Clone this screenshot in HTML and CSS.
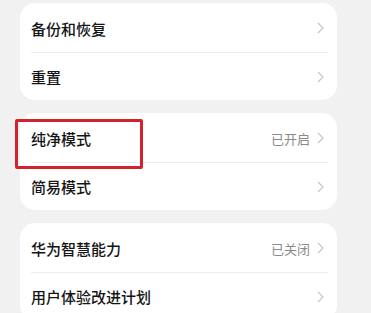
FILE: index.html
```html
<!DOCTYPE html>
<html lang="zh-CN">
<head>
    <meta charset="UTF-8">
    <meta name="viewport" content="width=device-width, initial-scale=1.0">
    <title>设置</title>
    <link rel="stylesheet" href="styles.css">
</head>
<body>
    <div class="page">
        <div class="card">
            <div class="row">
                <span class="label">备份和恢复</span>
                <span class="arrow"><svg width="7" height="12" viewBox="0 0 7 12"><path d="M1 1 L6 6 L1 11" fill="none" stroke="#c6c6c6" stroke-width="1.2"/></svg></span>
            </div>
            <div class="row">
                <span class="label">重置</span>
                <span class="arrow"><svg width="7" height="12" viewBox="0 0 7 12"><path d="M1 1 L6 6 L1 11" fill="none" stroke="#c6c6c6" stroke-width="1.2"/></svg></span>
            </div>
        </div>

        <div class="card">
            <!-- highlight box around the first row -->
            <div class="mark"></div>
            <div class="row">
                <span class="label">纯净模式</span>
                <span class="value">已开启</span>
                <span class="arrow"><svg width="7" height="12" viewBox="0 0 7 12"><path d="M1 1 L6 6 L1 11" fill="none" stroke="#c6c6c6" stroke-width="1.2"/></svg></span>
            </div>
            <div class="row">
                <span class="label">简易模式</span>
                <span class="arrow"><svg width="7" height="12" viewBox="0 0 7 12"><path d="M1 1 L6 6 L1 11" fill="none" stroke="#c6c6c6" stroke-width="1.2"/></svg></span>
            </div>
        </div>

        <div class="card">
            <div class="row">
                <span class="label">华为智慧能力</span>
                <span class="value">已关闭</span>
                <span class="arrow"><svg width="7" height="12" viewBox="0 0 7 12"><path d="M1 1 L6 6 L1 11" fill="none" stroke="#c6c6c6" stroke-width="1.2"/></svg></span>
            </div>
            <div class="row">
                <span class="label">用户体验改进计划</span>
                <span class="arrow"><svg width="7" height="12" viewBox="0 0 7 12"><path d="M1 1 L6 6 L1 11" fill="none" stroke="#c6c6c6" stroke-width="1.2"/></svg></span>
            </div>
        </div>
    </div>
</body>
</html>
```

FILE: styles.css
```css
body {
    margin: 0;
    background: #f1f1f1;
    font-family: "Noto Sans CJK SC", "Noto Sans", sans-serif;
    color: #141414;
}

.page {
    padding: 3px 34px 0 20px;
    display: flex;
    flex-direction: column;
    gap: 13px;
}

.card {
    position: relative;
    background: #fff;
    border-radius: 15px;
    padding: 1px 0 0;
}

.row {
    box-sizing: border-box;
    height: 48px;
    margin: 0 9px 0 11px;
    padding-right: 4px;
    display: flex;
    align-items: center;
}

.row + .row {
    border-top: 1px solid #ededed;
}

.label {
    flex: 1;
    font-size: 15px;
    font-weight: 500;
}

.value {
    font-size: 13px;
    color: #8a8a8a;
    margin-right: 7px;
}

.arrow {
    display: flex;
    align-items: center;
}

.mark {
    position: absolute;
    left: -5px;
    top: 6px;
    width: 122px;
    height: 44px;
    border: 3px solid #d2232c;
    border-radius: 2px;
}
```
